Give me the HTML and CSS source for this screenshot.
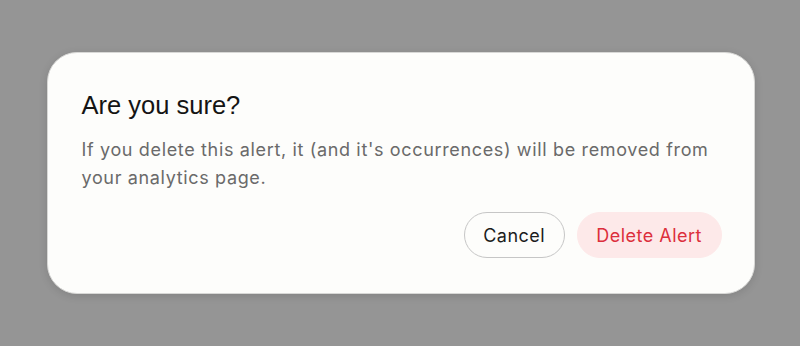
FILE: index.html
```html
<!DOCTYPE html>
<html>
<head>
<meta charset="utf-8">
<link rel="stylesheet" href="styles.css">
</head>
<body>
<div class="overlay">
  <div class="dialog">
    <h2 class="title">Are you sure?</h2>
    <p class="message">If you delete this alert, it (and it's occurrences) will be removed from your analytics page.</p>
    <div class="actions">
      <button class="btn btn-cancel">Cancel</button>
      <button class="btn btn-delete">Delete Alert</button>
    </div>
  </div>
</div>
</body>
</html>
```
FILE: styles.css
```css
html, body {
  margin: 0;
  padding: 0;
  height: 100%;
}
body {
  background: #959595;
  font-family: Inter, "Noto Sans", sans-serif;
}
.overlay {
  height: 346px;
  display: flex;
  align-items: center;
  justify-content: center;
  padding-left: 1px;
}
.dialog {
  box-sizing: border-box;
  width: 708px;
  height: 242px;
  background: #fdfdfb;
  border-radius: 30px;
  border: 1px solid #d8d8d6;
  box-shadow: 0 2px 8px rgba(0,0,0,0.12);
  padding: 35px 32px 35px 34px;
  display: flex;
  flex-direction: column;
}
.title {
  margin: 0;
  font-family: "Liberation Sans", Arial, sans-serif;
  font-size: 25.5px;
  font-weight: 400;
  color: #141414;
  line-height: 34px;
}
.message {
  margin: 14px 0 0 0;
  font-size: 18px;
  letter-spacing: 0.65px;
  line-height: 28px;
  color: #6a6a6a;
}
.actions {
  margin-top: auto;
  display: flex;
  justify-content: flex-end;
  gap: 12px;
}
.btn {
  font-family: Inter, "Noto Sans", sans-serif;
  font-size: 18px;
  letter-spacing: 0.5px;
  height: 46px;
  border-radius: 23px;
  padding: 0 18.5px;
  cursor: pointer;
}
.btn-cancel {
  background: #fdfdfb;
  border: 1px solid #c6c6c6;
  color: #1c1c1c;
}
.btn-delete {
  background: #fde9e9;
  border: 1px solid #fde9e9;
  color: #dc2f3c;
}
```
